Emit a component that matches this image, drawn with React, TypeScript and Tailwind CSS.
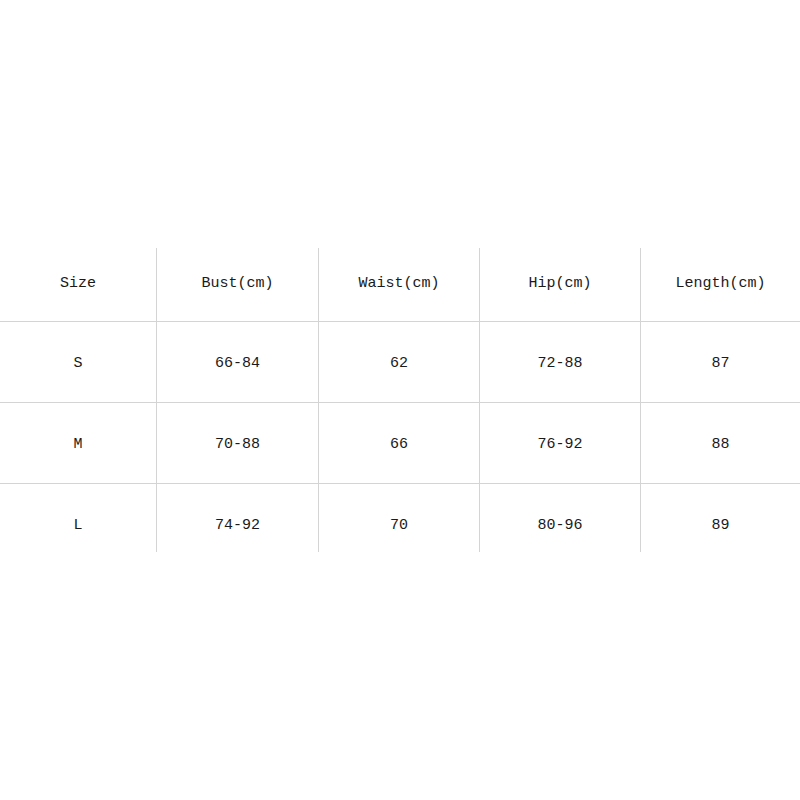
import React from "react";

const headers = ["Size", "Bust(cm)", "Waist(cm)", "Hip(cm)", "Length(cm)"];

const rows = [
  ["S", "66-84", "62", "72-88", "87"],
  ["M", "70-88", "66", "76-92", "88"],
  ["L", "74-92", "70", "80-96", "89"],
];

const Cell = ({ text, first, className }: { text: string; first: boolean; className: string }) => (
  <div
    className={`flex justify-center ${first ? "" : "border-l border-[#d4d4d4]"} ${className}`}
  >
    <span className="leading-[20px]">{text}</span>
  </div>
);

export default function App() {
  return (
    <div
      className="w-[800px] h-[800px] bg-white pt-[248px] text-[15px] text-[#1a1a1a]"
      style={{ fontFamily: '"Liberation Mono", "DejaVu Sans Mono", monospace' }}
    >
      <div className="grid grid-cols-[156px_162px_161px_161px_1fr]">
        {headers.map((h, i) => (
          <Cell key={h} text={h} first={i === 0} className="h-[74px] pt-[26px] border-b border-[#d4d4d4]" />
        ))}
        {rows.map((r, ri) =>
          r.map((v, ci) => (
            <Cell
              key={`${ri}-${ci}`}
              text={v}
              first={ci === 0}
              className={
                ri < rows.length - 1
                  ? "h-[81px] pt-[32px] border-b border-[#d4d4d4]"
                  : "h-[68px] pt-[32px]"
              }
            />
          ))
        )}
      </div>
    </div>
  );
}
